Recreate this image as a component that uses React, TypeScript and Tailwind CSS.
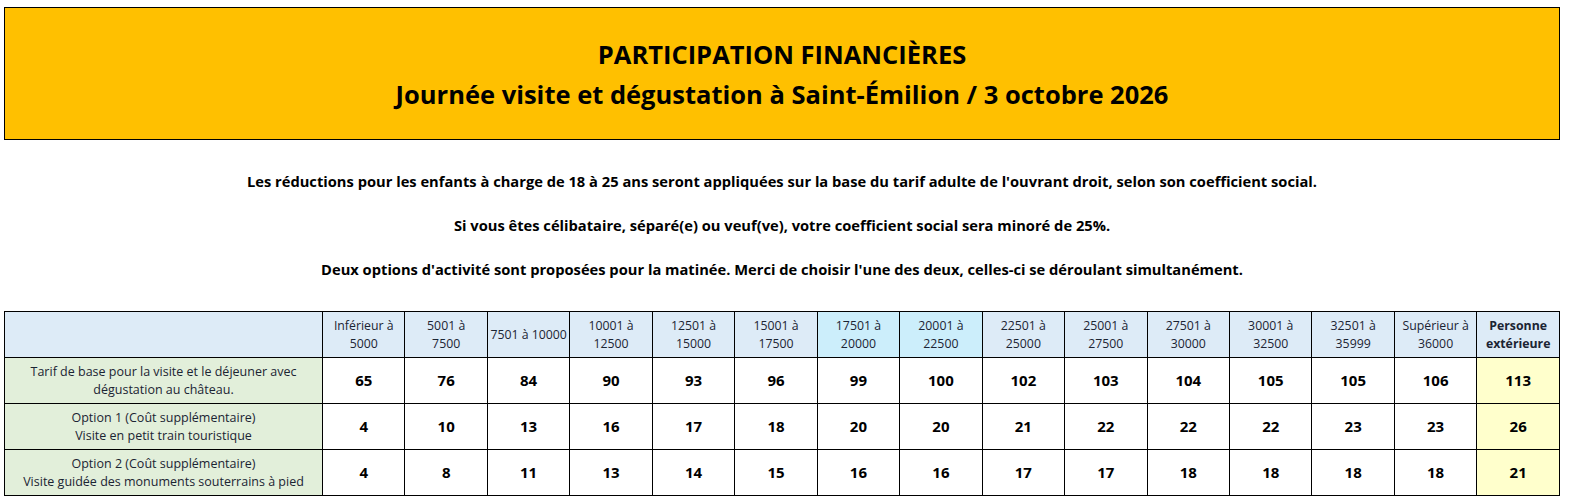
const headers: string[][] = [
  ["Inférieur à", "5000"],
  ["5001 à", "7500"],
  ["7501 à 10000"],
  ["10001 à", "12500"],
  ["12501 à", "15000"],
  ["15001 à", "17500"],
  ["17501 à", "20000"],
  ["20001 à", "22500"],
  ["22501 à", "25000"],
  ["25001 à", "27500"],
  ["27501 à", "30000"],
  ["30001 à", "32500"],
  ["32501 à", "35999"],
  ["Supérieur à", "36000"],
  ["Personne", "extérieure"],
];

const rows: { label: string[]; values: number[] }[] = [
  {
    label: ["Tarif de base pour la visite et le déjeuner avec", "dégustation au château."],
    values: [65, 76, 84, 90, 93, 96, 99, 100, 102, 103, 104, 105, 105, 106, 113],
  },
  {
    label: ["Option 1 (Coût supplémentaire)", "Visite en petit train touristique"],
    values: [4, 10, 13, 16, 17, 18, 20, 20, 21, 22, 22, 22, 23, 23, 26],
  },
  {
    label: ["Option 2 (Coût supplémentaire)", "Visite guidée des monuments souterrains à pied"],
    values: [4, 8, 11, 13, 14, 15, 16, 16, 17, 17, 18, 18, 18, 18, 21],
  },
];

function headerBg(i: number) {
  if (i === 6 || i === 7) return "bg-[#CCEEFB]";
  return "bg-[#DDEBF7]";
}

export default function App() {
  return (
    <div className="w-[1569px] h-[503px] overflow-hidden bg-white pt-[7px] pl-[4px] font-['Open_Sans',sans-serif] text-black">
      {/* Title banner */}
      <div className="w-[1556px] h-[133px] border border-black bg-[#FFC000] flex flex-col items-center justify-center gap-[6px] font-bold text-[25.5px] leading-[34px]">
        <div>PARTICIPATION FINANCIÈRES</div>
        <div>Journée visite et dégustation à Saint-Émilion / 3 octobre 2026</div>
      </div>

      {/* Notes */}
      <div className="w-[1556px] flex flex-col items-center gap-[25px] pt-[32px] font-bold text-[14.7px] leading-[19px]">
        <p>
          Les réductions pour les enfants à charge de 18 à 25 ans seront appliquées sur la base du tarif adulte de
          l'ouvrant droit, selon son coefficient social.
        </p>
        <p>Si vous êtes célibataire, séparé(e) ou veuf(ve), votre coefficient social sera minoré de 25%.</p>
        <p>
          Deux options d'activité sont proposées pour la matinée. Merci de choisir l'une des deux, celles-ci se
          déroulant simultanément.
        </p>
      </div>

      {/* Price table */}
      <table className="mt-[32px] w-[1556px] table-fixed border-collapse">
        <colgroup>
          <col className="w-[318px]" />
          {headers.map((_, i) => (
            <col key={i} />
          ))}
        </colgroup>
        <thead>
          <tr className="h-[46px]">
            <th className="border border-black bg-[#DDEBF7]" />
            {headers.map((h, i) => (
              <th
                key={i}
                className={`border border-black ${headerBg(i)} text-[12.3px] leading-[18px] text-[#1b2433] ${
                  i === 14 ? "font-bold" : "font-normal"
                }`}
              >
                {h.map((line, j) => (
                  <div key={j}>{line}</div>
                ))}
              </th>
            ))}
          </tr>
        </thead>
        <tbody>
          {rows.map((r, ri) => (
            <tr key={ri} className="h-[46px]">
              <td className="border border-black bg-[#E2EFDA] text-center text-[12.5px] leading-[18px] text-[#1b2433]">
                {r.label.map((line, j) => (
                  <div key={j}>{line}</div>
                ))}
              </td>
              {r.values.map((v, i) => (
                <td
                  key={i}
                  className={`border border-black text-center font-bold text-[15px] ${
                    i === 14 ? "bg-[#FFFFCC]" : "bg-white"
                  }`}
                >
                  {v}
                </td>
              ))}
            </tr>
          ))}
        </tbody>
      </table>
    </div>
  );
}
